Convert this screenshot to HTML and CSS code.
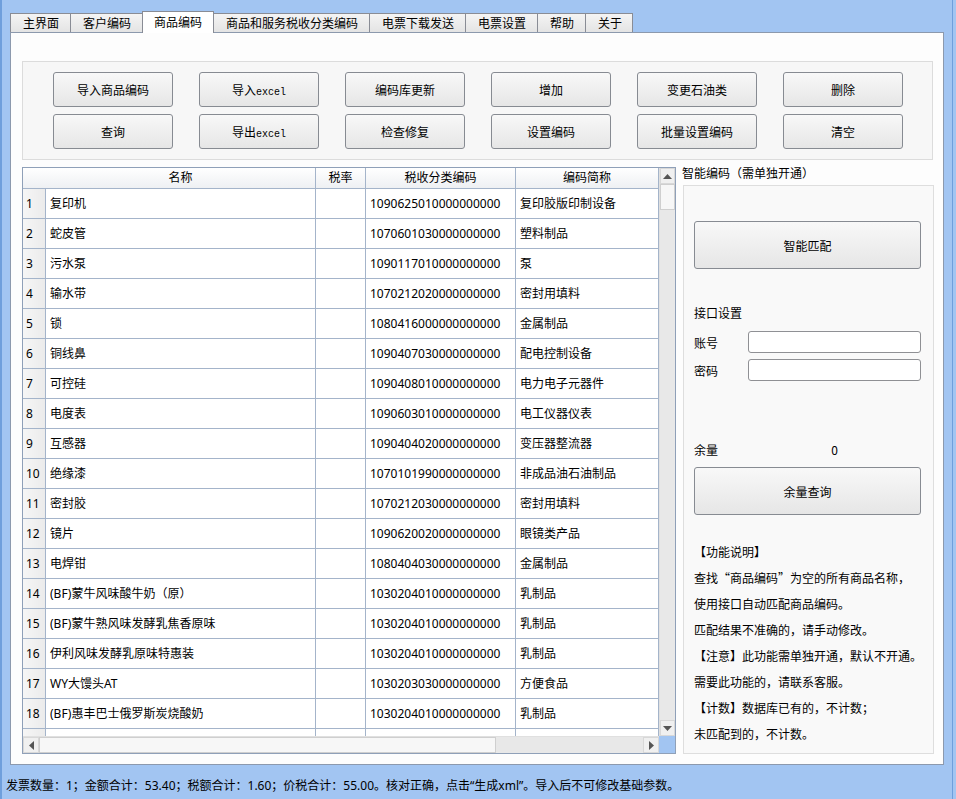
FILE: index.html
```html
<!DOCTYPE html>
<html lang="zh-CN">
<head>
<meta charset="utf-8">
<title>商品编码</title>
<link rel="stylesheet" href="styles.css">
</head>
<body>
<div class="window">
  <div class="tabs">
    <div class="tab">主界面</div>
    <div class="tab">客户编码</div>
    <div class="tab active">商品编码</div>
    <div class="tab">商品和服务税收分类编码</div>
    <div class="tab">电票下载发送</div>
    <div class="tab">电票设置</div>
    <div class="tab">帮助</div>
    <div class="tab last">关于</div>
  </div>
  <div class="panel">
    <div class="toolbar">
      <button class="btn">导入商品编码</button>
      <button class="btn"><span>导入<span class="mono">excel</span></span></button>
      <button class="btn">编码库更新</button>
      <button class="btn">增加</button>
      <button class="btn">变更石油类</button>
      <button class="btn">删除</button>
      <button class="btn">查询</button>
      <button class="btn"><span>导出<span class="mono">excel</span></span></button>
      <button class="btn">检查修复</button>
      <button class="btn">设置编码</button>
      <button class="btn">批量设置编码</button>
      <button class="btn">清空</button>
    </div>
    <div class="main">
      <div class="table-wrap">
        <div class="viewport">
          <div class="row head">
            <div class="cell rn"></div>
            <div class="cell c">名称</div>
            <div class="cell c">税率</div>
            <div class="cell c">税收分类编码</div>
            <div class="cell c">编码简称</div>
          </div>
          <div class="row"><div class="cell rn">1</div><div class="cell">复印机</div><div class="cell"></div><div class="cell">1090625010000000000</div><div class="cell">复印胶版印制设备</div></div>
          <div class="row"><div class="cell rn">2</div><div class="cell">蛇皮管</div><div class="cell"></div><div class="cell">1070601030000000000</div><div class="cell">塑料制品</div></div>
          <div class="row"><div class="cell rn">3</div><div class="cell">污水泵</div><div class="cell"></div><div class="cell">1090117010000000000</div><div class="cell">泵</div></div>
          <div class="row"><div class="cell rn">4</div><div class="cell">输水带</div><div class="cell"></div><div class="cell">1070212020000000000</div><div class="cell">密封用填料</div></div>
          <div class="row"><div class="cell rn">5</div><div class="cell">锁</div><div class="cell"></div><div class="cell">1080416000000000000</div><div class="cell">金属制品</div></div>
          <div class="row"><div class="cell rn">6</div><div class="cell">铜线鼻</div><div class="cell"></div><div class="cell">1090407030000000000</div><div class="cell">配电控制设备</div></div>
          <div class="row"><div class="cell rn">7</div><div class="cell">可控硅</div><div class="cell"></div><div class="cell">1090408010000000000</div><div class="cell">电力电子元器件</div></div>
          <div class="row"><div class="cell rn">8</div><div class="cell">电度表</div><div class="cell"></div><div class="cell">1090603010000000000</div><div class="cell">电工仪器仪表</div></div>
          <div class="row"><div class="cell rn">9</div><div class="cell">互感器</div><div class="cell"></div><div class="cell">1090404020000000000</div><div class="cell">变压器整流器</div></div>
          <div class="row"><div class="cell rn">10</div><div class="cell">绝缘漆</div><div class="cell"></div><div class="cell">1070101990000000000</div><div class="cell">非成品油石油制品</div></div>
          <div class="row"><div class="cell rn">11</div><div class="cell">密封胶</div><div class="cell"></div><div class="cell">1070212030000000000</div><div class="cell">密封用填料</div></div>
          <div class="row"><div class="cell rn">12</div><div class="cell">镜片</div><div class="cell"></div><div class="cell">1090620020000000000</div><div class="cell">眼镜类产品</div></div>
          <div class="row"><div class="cell rn">13</div><div class="cell">电焊钳</div><div class="cell"></div><div class="cell">1080404030000000000</div><div class="cell">金属制品</div></div>
          <div class="row"><div class="cell rn">14</div><div class="cell">(BF)蒙牛风味酸牛奶（原）</div><div class="cell"></div><div class="cell">1030204010000000000</div><div class="cell">乳制品</div></div>
          <div class="row"><div class="cell rn">15</div><div class="cell">(BF)蒙牛熟风味发酵乳焦香原味</div><div class="cell"></div><div class="cell">1030204010000000000</div><div class="cell">乳制品</div></div>
          <div class="row"><div class="cell rn">16</div><div class="cell">伊利风味发酵乳原味特惠装</div><div class="cell"></div><div class="cell">1030204010000000000</div><div class="cell">乳制品</div></div>
          <div class="row"><div class="cell rn">17</div><div class="cell">WY大馒头AT</div><div class="cell"></div><div class="cell">1030203030000000000</div><div class="cell">方便食品</div></div>
          <div class="row"><div class="cell rn">18</div><div class="cell">(BF)惠丰巴士俄罗斯炭烧酸奶</div><div class="cell"></div><div class="cell">1030204010000000000</div><div class="cell">乳制品</div></div>
          <div class="row"><div class="cell rn">19</div><div class="cell">(BF)小人小金膜饮料</div><div class="cell"></div><div class="cell">1030204010000000000</div><div class="cell">乳制品</div></div>
        </div>
        <div class="vscroll">
          <div class="sb-btn"><svg width="9" height="5" viewBox="0 0 9 5"><polygon points="0,5 9,5 4.5,0" fill="#555"/></svg></div>
          <div class="vthumb"></div>
          <div class="sb-track"></div>
          <div class="sb-btn"><svg width="9" height="5" viewBox="0 0 9 5"><polygon points="0,0 9,0 4.5,5" fill="#555"/></svg></div>
        </div>
        <div class="hscroll">
          <div class="sb-btn h"><svg width="5" height="9" viewBox="0 0 5 9"><polygon points="5,0 5,9 0,4.5" fill="#555"/></svg></div>
          <div class="hthumb"></div>
          <div class="sb-track"></div>
          <div class="sb-btn h"><svg width="5" height="9" viewBox="0 0 5 9"><polygon points="0,0 0,9 5,4.5" fill="#555"/></svg></div>
        </div>
        <div class="corner"></div>
      </div>
      <div class="side">
        <div class="side-title">智能编码（需单独开通）</div>
        <div class="side-box">
          <button class="btn big">智能匹配</button>
          <div class="sect">接口设置</div>
          <div class="form-row first"><span class="lbl">账号</span><span class="input"></span></div>
          <div class="form-row"><span class="lbl">密码</span><span class="input"></span></div>
          <div class="form-row balance"><span class="lbl">余量</span><span class="val">0</span></div>
          <button class="btn big q">余量查询</button>
          <div class="desc">
            <p>【功能说明】</p>
            <p>查找“商品编码”为空的所有商品名称，</p>
            <p>使用接口自动匹配商品编码。</p>
            <p>匹配结果不准确的，请手动修改。</p>
            <p>【注意】此功能需单独开通，默认不开通。</p>
            <p>需要此功能的，请联系客服。</p>
            <p>【计数】数据库已有的，不计数；</p>
            <p>未匹配到的，不计数。</p>
          </div>
        </div>
      </div>
    </div>
  </div>
  <div class="status">发票数量：1；金额合计：53.40；税额合计：1.60；价税合计：55.00。核对正确，点击“生成xml”。导入后不可修改基础参数。</div>
</div>
</body>
</html>
```

FILE: styles.css
```css
* { box-sizing: border-box; }
html, body { margin: 0; padding: 0; }
body {
  width: 956px;
  height: 799px;
  overflow: hidden;
  background: #a2c5f2;
  font-family: "Noto Sans CJK SC", sans-serif;
  font-size: 12px;
  color: #000;
}
.window {
  width: 956px;
  height: 799px;
  display: flex;
  flex-direction: column;
  box-shadow: inset 2px 0 0 #6f9fdc, inset -3px 0 0 #a2c5f2, inset -4px 0 0 #6f9fdc;
}
.tabs {
  height: 32px;
  display: flex;
  align-items: flex-end;
  padding-left: 10px;
}
.tab {
  height: 19px;
  line-height: 18px;
  padding: 0 11px 0 12px;
  border-top: 1px solid #898c95;
  border-left: 1px solid #898c95;
  background: linear-gradient(#f4f4f4, #e4e4e4);
  white-space: nowrap;
}
.tab.last { border-right: 1px solid #898c95; padding-right: 10px; }
.tab.active {
  position: relative;
  z-index: 1;
  height: 22px;
  line-height: 19px;
  margin-bottom: -1px;
  padding: 0 11px;
  border-right: 1px solid #898c95;
  background: #ffffff;
}
.tab.active + .tab { border-left: none; padding-left: 12px; }
.panel {
  height: 733px;
  margin: 0 12px 0 10px;
  background: #fdfdfd;
  border: 1px solid #8c99ad;
  padding: 28px 9px 0 11px;
}
.toolbar {
  height: 99px;
  border: 1px solid #dcdcdc;
  background: #f7f7f7;
  padding: 10px 0 0 30px;
  display: grid;
  grid-template-columns: repeat(6, 120px);
  grid-auto-rows: 35px;
  column-gap: 26px;
  row-gap: 7px;
  margin-right: 1px;
}
.btn {
  font-family: "Noto Sans CJK SC", sans-serif;
  font-size: 12px;
  color: #000;
  border: 1px solid #878b92;
  border-radius: 3px;
  background: linear-gradient(#f8f8f8, #e6e6e6);
  padding: 0;
  display: flex;
  align-items: center;
  justify-content: center;
}
.mono { font-family: "Liberation Mono", monospace; font-size: 10px; }
.main {
  margin-top: 7px;
  height: 587px;
  display: flex;
  gap: 6px;
}
.table-wrap {
  width: 654px;
  height: 587px;
  border: 1px solid #8fa0b8;
  display: grid;
  grid-template-columns: 636px 16px;
  grid-template-rows: 568px 17px;
  background: #fff;
  font-family: "Noto Sans", "Noto Sans CJK SC", sans-serif;
}
.viewport { overflow: hidden; }
.row {
  display: grid;
  grid-template-columns: 23px 270px 50px 150px 143px;
  height: 30px;
}
.cell {
  border-right: 1px solid #a4b4ca;
  border-bottom: 1px solid #a4b4ca;
  padding-left: 4px;
  line-height: 29px;
  white-space: nowrap;
  overflow: hidden;
  background: #fff;
}
.cell.rn {
  padding-left: 3px;
  background: linear-gradient(to right, #f6f6f6, #ebebeb);
}
.row.head { height: 21px; }
.row.head .cell {
  line-height: 20px;
  text-align: center;
  padding-left: 0;
  background: linear-gradient(#ffffff, #eef0f3);
}
.row.head .cell.rn { border-right: none; }
.vscroll {
  display: flex;
  flex-direction: column;
  background: #e8e8e8;
  border-left: 1px solid #e0e0e0;
}
.sb-btn {
  height: 16px;
  flex: none;
  display: flex;
  align-items: center;
  justify-content: center;
  background: #f0f0f0;
  border: 1px solid #d8d8d8;
}
.sb-btn.h { width: 16px; height: auto; }
.vthumb {
  height: 26px;
  flex: none;
  background: #f7f7f7;
  border: 1px solid #cfcfcf;
}
.sb-track { flex: 1; }
.hscroll {
  display: flex;
  background: #e8e8e8;
  border-top: 1px solid #e0e0e0;
}
.hthumb {
  width: 457px;
  flex: none;
  background: #f7f7f7;
  border: 1px solid #cfcfcf;
}
.corner { background: #a2c5f2; }
.side {
  width: 252px;
  display: flex;
  flex-direction: column;
}
.side-title {
  height: 18px;
  line-height: 12px;
  white-space: nowrap;
}
.side-box {
  flex: 1;
  margin-left: 1px;
  border: 1px solid #dedede;
  background: #f9f9f9;
  padding: 35px 12px 0 10px;
}
.btn.big { width: 227px; height: 48px; }
.sect { margin-top: 36px; line-height: 16px; }
.form-row {
  display: flex;
  align-items: center;
  height: 22px;
  margin-top: 6px;
}
.form-row.first { margin-top: 10px; }
.lbl { width: 54px; }
.input {
  width: 173px;
  height: 22px;
  border: 1px solid #8f9094;
  border-radius: 3px;
  background: #fff;
}
.form-row.balance { margin-top: 60px; height: 16px; }
.val { width: 173px; text-align: center; }
.btn.q { margin-top: 10px; }
.desc { margin-top: 24px; }
.desc p { margin: 0; line-height: 26px; white-space: nowrap; }
.status {
  flex: 1;
  padding: 13px 0 0 6px;
  line-height: 16px;
  white-space: nowrap;
  font-family: "Noto Sans", "Noto Sans CJK SC", sans-serif;
  font-size: 12px;
}
```
